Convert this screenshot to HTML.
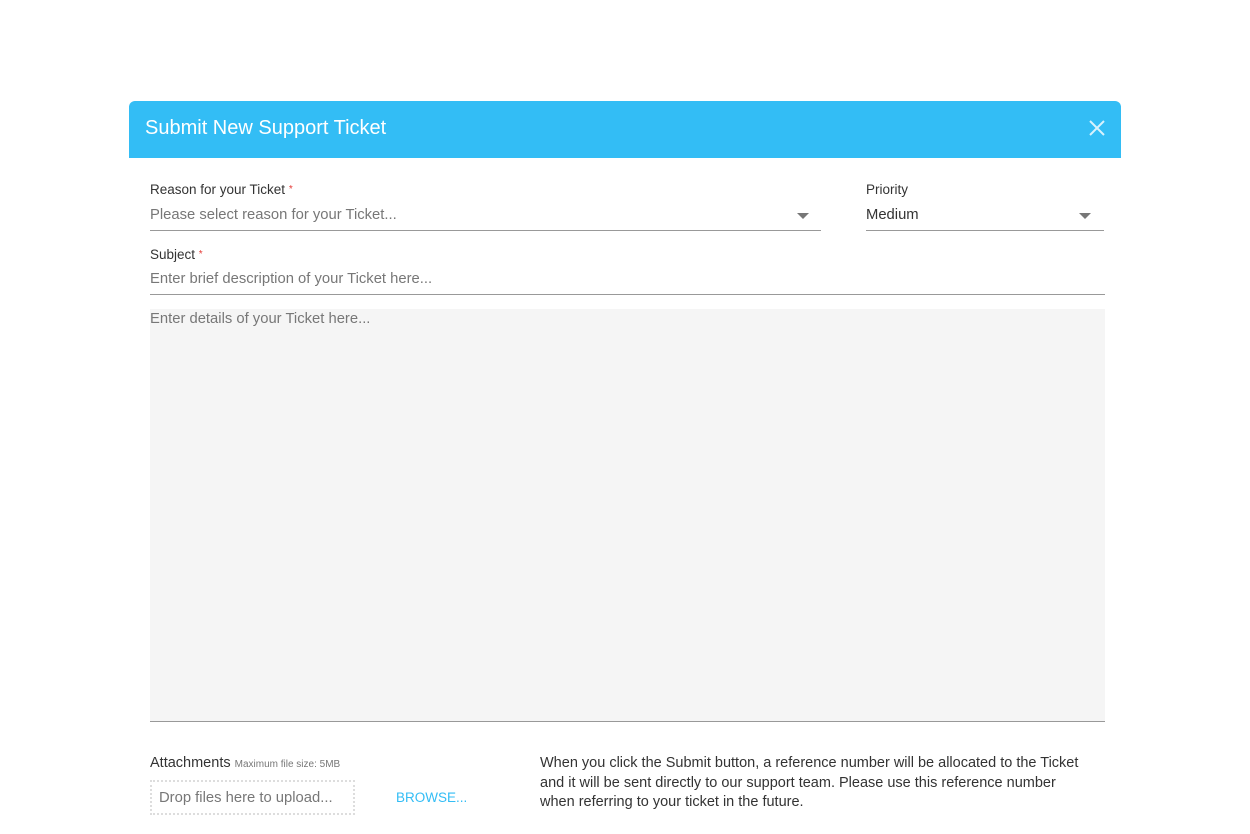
<!DOCTYPE html>
<html><head><style>
body{margin:0;width:1250px;height:834px;background:#fff;font-family:"Liberation Sans",sans-serif;position:relative;overflow:hidden}
.abs{position:absolute}
.hdr{left:129px;top:101px;width:992px;height:57px;background:#33bdf5;border-radius:6px 6px 0 0}
.hdr span{position:absolute;left:16px;top:16px;color:#fff;font-size:20px}
.lbl{font-size:13.5px;color:#333}
.star{color:#e53935;font-size:10px;vertical-align:2px}
.ph{font-size:14.8px;color:#777}
.line{height:1px;background:#999}
.tri{width:0;height:0;border-left:6px solid transparent;border-right:6px solid transparent;border-top:6px solid #777}
</style></head><body>
<div class="abs hdr"><span>Submit New Support Ticket</span>
<svg class="abs" style="left:960px;top:19px" width="16" height="16" viewBox="0 0 16 16"><path d="M1 1L15 15M15 1L1 15" stroke="#d8f2fd" stroke-width="2"/></svg></div>

<div class="abs lbl" style="left:150px;top:182px">Reason for your Ticket <span class="star">*</span></div>
<div class="abs ph" style="left:150px;top:207px">Please select reason for your Ticket...</div>
<div class="abs tri" style="left:797px;top:213px"></div>
<div class="abs line" style="left:150px;top:230px;width:671px"></div>

<div class="abs lbl" style="left:866px;top:182px">Priority</div>
<div class="abs ph" style="left:866px;top:207px;color:#333">Medium</div>
<div class="abs tri" style="left:1079px;top:213px"></div>
<div class="abs line" style="left:866px;top:230px;width:238px"></div>

<div class="abs lbl" style="left:150px;top:247px">Subject <span class="star">*</span></div>
<div class="abs ph" style="left:150px;top:271px">Enter brief description of your Ticket here...</div>
<div class="abs line" style="left:150px;top:294px;width:955px"></div>

<div class="abs" style="left:150px;top:309px;width:955px;height:412px;background:#f5f5f5;border-bottom:1px solid #999"></div>
<div class="abs ph" style="left:150px;top:311px">Enter details of your Ticket here...</div>

<div class="abs" style="left:150px;top:755px;font-size:14.5px;color:#333">Attachments <span style="font-size:10px;color:#777">Maximum file size: 5MB</span></div>
<div class="abs" style="left:150px;top:780px;width:205px;height:35px;border:2px dotted #ddd;box-sizing:border-box"></div>
<div class="abs ph" style="left:159px;top:790px">Drop files here to upload...</div>
<div class="abs" style="left:396px;top:790px;font-size:13.5px;color:#33bdf5">BROWSE...</div>
<div class="abs" style="left:540px;top:754px;font-size:14.5px;color:#333;line-height:19.5px;width:580px">When you click the Submit button, a reference number will be allocated to the Ticket<br>and it will be sent directly to our support team. Please use this reference number<br>when referring to your ticket in the future.</div>
</body></html>
